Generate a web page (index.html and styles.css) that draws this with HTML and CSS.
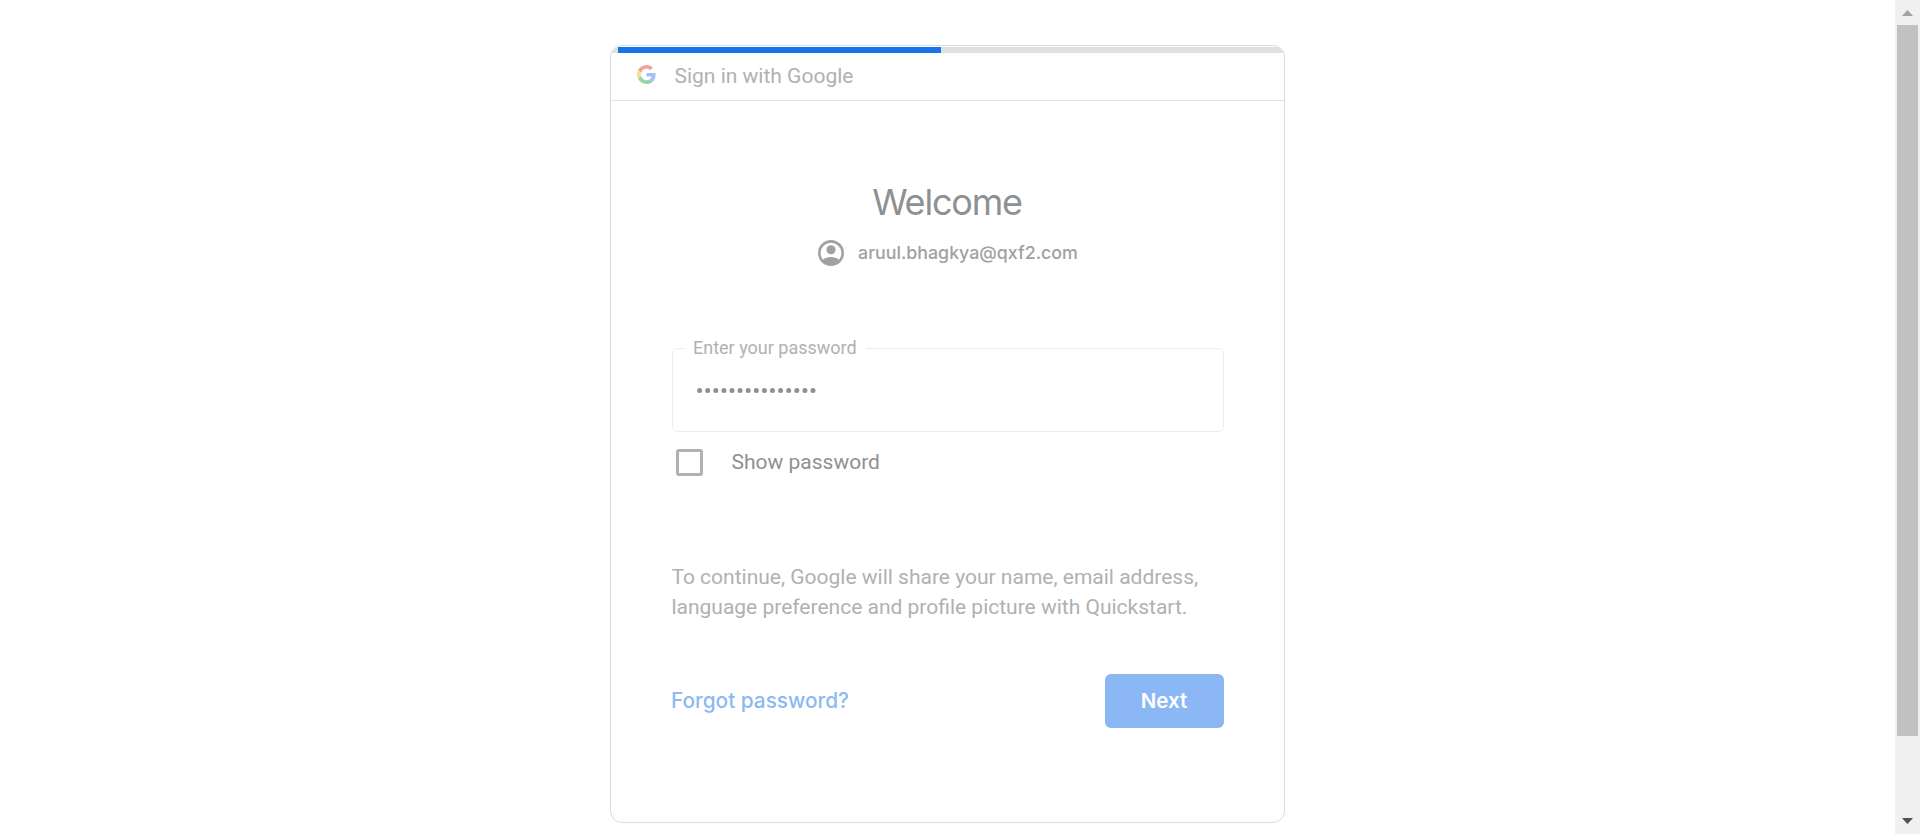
FILE: index.html
```html
<!DOCTYPE html>
<html lang="en">
<head>
<meta charset="utf-8">
<title>Sign in with Google</title>
<link rel="stylesheet" href="styles.css">
</head>
<body>
<div class="window">
  <main class="page">
    <section class="card">
      <div class="progress"><div class="progress-value"></div></div>
      <header class="card-header">
        <svg class="logo" viewBox="0 0 48 48" aria-hidden="true">
          <path fill="#f4a19a" d="M24 9.5c3.54 0 6.71 1.22 9.21 3.6l6.85-6.85C35.9 2.38 30.47 0 24 0 14.62 0 6.51 5.38 2.56 13.22l7.98 6.19C12.43 13.72 17.74 9.5 24 9.5z"/>
          <path fill="#a1c2fa" d="M46.98 24.55c0-1.57-.15-3.09-.38-4.55H24v9.02h12.94c-.58 2.96-2.26 5.48-4.78 7.18l7.73 6c4.51-4.18 7.09-10.36 7.09-17.65z"/>
          <path fill="#fddd82" d="M10.53 28.59c-.48-1.45-.76-2.99-.76-4.59s.27-3.14.76-4.59l-7.98-6.19C.92 16.46 0 20.12 0 24c0 3.88.92 7.54 2.56 10.78l7.97-6.19z"/>
          <path fill="#99d3a9" d="M24 48c6.48 0 11.93-2.13 15.89-5.81l-7.73-6c-2.15 1.45-4.92 2.3-8.16 2.3-6.26 0-11.57-4.22-13.47-9.91l-7.98 6.19C6.51 42.62 14.62 48 24 48z"/>
        </svg>
        <span class="header-text">Sign in with Google</span>
      </header>
      <div class="content">
        <h1 class="title">Welcome</h1>
        <div class="account">
          <svg class="avatar" viewBox="2 2 20 20" aria-hidden="true">
            <path fill="#a0a1a3" fill-rule="evenodd" d="M12 2a10 10 0 1 0 0 20 10 10 0 0 0 0-20zM5.8 17.1a8 8 0 1 1 12.4 0C16.8 15.7 14.6 15 12 15s-4.800.7-6.200 2.100z"/>
            <circle cx="12" cy="9.500" r="3.500" fill="#a0a1a3"/>
          </svg>
          <span class="email">aruul.bhagkya@qxf2.com</span>
        </div>
        <div class="field">
          <span class="field-label">Enter your password</span>
          <svg class="dots" width="124" height="6" viewBox="0 0 124 6" aria-label="Password">
            <path d="M2.600 2.500H122" stroke="#8f9091" stroke-width="5" stroke-linecap="round" stroke-dasharray="0 8.100"/>
          </svg>
        </div>
        <label class="show"><span class="checkbox"></span><span class="show-text">Show password</span></label>
        <p class="notice">To continue, Google will share your name, email address,<br>language preference and profile picture with Quickstart.</p>
        <div class="actions">
          <a class="forgot">Forgot password?</a>
          <button class="next">Next</button>
        </div>
      </div>
    </section>
  </main>
  <aside class="scrollbar">
    <svg class="arrow" width="11" height="6" viewBox="0 0 11 6"><path fill="#a3a3a3" d="M5.500 0L11 6H0z"/></svg>
    <div class="thumb"></div>
    <svg class="arrow arrow-down" width="11" height="6" viewBox="0 0 11 6"><path fill="#505050" d="M0 0H11L5.500 6z"/></svg>
  </aside>
</div>
</body>
</html>
```
FILE: styles.css
```css
* { box-sizing: border-box; }
body { margin: 0; background: #fff; font-family: Roboto, "Liberation Sans", sans-serif; font-size: 21px; color: #afb1b3; overflow: hidden; }
.window { display: flex; height: 834px; }
.page { flex: 1; padding-top: 45px; display: flex; justify-content: center; align-items: flex-start; }
.card { width: 675px; height: 778px; border: 1px solid #dadce0; border-radius: 12px; overflow: hidden; padding-top: 1px; background: #fff; }
.progress { height: 6px; background: #e0e0e0; border-radius: 10px 10px 0 0; overflow: hidden; }
.progress-value { width: 322.500px; height: 6px; margin-left: 7px; background: #1a73e8; }
.card-header { height: 48px; border-bottom: 1px solid #e1e2e4; display: flex; align-items: center; padding: 0 0 3px 26px; gap: 18.500px; }
.logo { width: 19px; height: 19px; margin-bottom: 1px; }
.header-text { line-height: 30px; padding-top: 1px; }
.content { padding: 77px 60px 0 61px; }
.title { margin: 0; padding-right: 2px; font: 400 36px/48px Inter, sans-serif; letter-spacing: -1.200px; text-align: center; color: #8f9091; }
.account { display: flex; justify-content: center; align-items: center; gap: 14px; height: 30px; margin-top: 12px; }
.avatar { width: 26px; height: 26px; }
.email { font: 500 17.800px/30px Inter, sans-serif; color: #a0a1a3; }
.field { position: relative; height: 84px; margin-top: 80px; border: 1px solid #ececee; border-radius: 6px; padding: 39px 0 0 24px; }
.field-label { position: absolute; left: 11px; top: -16px; padding: 0 9px; background: #fff; font-size: 18px; line-height: 30px; white-space: nowrap; }
.dots { display: block; }
.show { display: flex; align-items: center; height: 27px; margin-top: 17px; padding-left: 4px; gap: 28.500px; color: #8f9091; }
.show-text { padding-bottom: 2px; }
.checkbox { width: 27px; height: 27px; border: 3px solid #afb1b3; border-radius: 3px; }
.notice { margin: 86px 0 52px -.6px; line-height: 30px; white-space: nowrap; }
.actions { display: flex; justify-content: space-between; align-items: center; height: 54px; }
.forgot { margin-left: -1px; font: 500 20.800px/30px Inter, sans-serif; color: #8cb9f3; }
.next { width: 119px; height: 54px; border: 0; border-radius: 6px; background: #8cb7f5; color: #fff; font: 600 20.500px/30px Inter, sans-serif; padding: 0 1px 0 0; }
.scrollbar { width: 25px; background: #f0f0f0; display: flex; flex-direction: column; align-items: center; padding-top: 10px; }
.arrow { display: block; flex: none; }
.thumb { width: 21px; height: 711px; margin-top: 9px; background: #c1c1c1; }
.arrow-down { margin-top: 82px; }
```
